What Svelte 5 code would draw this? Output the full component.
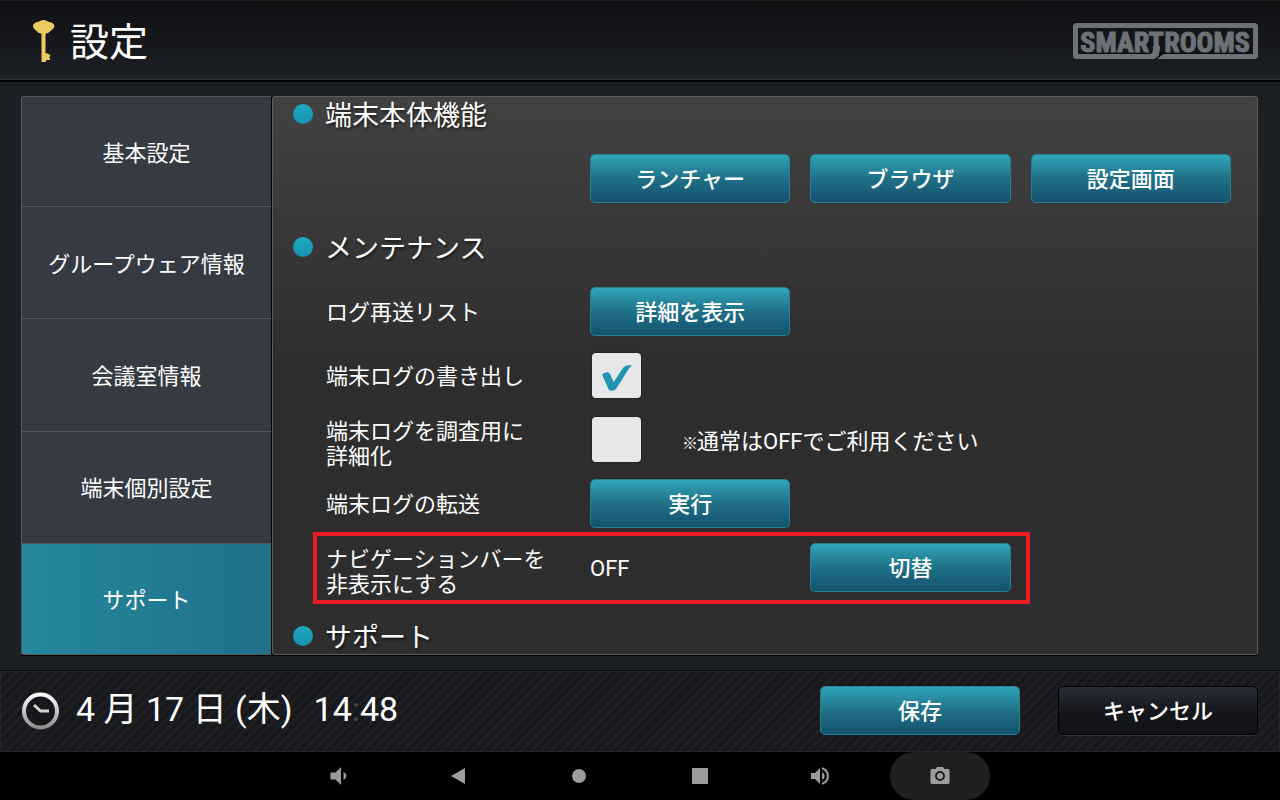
<script>
	const tabs = ['基本設定', 'グループウェア情報', '会議室情報', '端末個別設定', 'サポート'];

	let active = $state('サポート');
	let exportLog = $state(true);
	let verboseLog = $state(false);
	let navHidden = $state(false);
</script>

<div class="screen">
	<header class="header">
		<svg class="key" width="22" height="42" viewBox="0 0 22 42" aria-hidden="true">
			<path
				fill="#edcb62"
				d="M10.500 0c2.400 0 3.600 1.400 6 2 2.800.6 4.800 1.800 4.800 4 0 2-1.500 3-3.300 4.600-1.800 1.700-3 3-5.500 3.200v19.400h1.800l.8 1h2v2l-1 1 1 1.300v1.500h-3.300l-1 1v1H8.500V13.800c-2.500-.2-3.700-1.500-5.500-3.200C1.400 9 0 8 0 6c0-2.200 2-3.400 4.500-4 2.400-.6 3.600-2 6-2z"
			/>
		</svg>
		<h1>設定</h1>
		<svg class="logo" width="186" height="38" viewBox="0 0 186 38" role="img" aria-label="SMART ROOMS">
			<rect x="3.500" y="2.500" width="180" height="31" rx="1" fill="#131619" stroke="#08090a" stroke-width="5" />
			<rect x="3.500" y="3.500" width="180" height="31" rx="1" fill="none" stroke="#6d7278" stroke-width="5" />
			<path d="M88 30h6l-9 7h-4c4-1 6-3 7-7z" fill="#08090a" />
			<path d="M81 24h7c0 6-1 10-6 13h-5v-5c3 0 4-2 4-5z" fill="#6d7278" />
			<g class="logo-text">
				<text x="50" y="30">SMART</text>
				<text x="135" y="30">ROOMS</text>
			</g>
		</svg>
	</header>

	<main class="main">
		<nav class="tabs">
			{#each tabs as tab}
				<button type="button" class="tab" class:active={tab === active} onclick={() => (active = tab)}>
					{tab}
				</button>
			{/each}
		</nav>

		<section class="content">
			<h2>端末本体機能</h2>
			<div class="row">
				<button type="button" class="btn first">ランチャー</button>
				<button type="button" class="btn">ブラウザ</button>
				<button type="button" class="btn">設定画面</button>
			</div>

			<h2>メンテナンス</h2>
			<div class="row">
				<span class="label">ログ再送リスト</span>
				<button type="button" class="btn">詳細を表示</button>
			</div>
			<div class="row">
				<label class="label" for="export-log">端末ログの書き出し</label>
				<div class="field">
					<span class="check">
						<input id="export-log" type="checkbox" bind:checked={exportLog} />
						{#if exportLog}
							<svg width="30" height="30" viewBox="0 -4 30 30" aria-hidden="true">
								<path
									fill="#2094b2"
									d="M.2 10C1 8.200 3 7.400 5 7.300c1.500 0 2.400.5 3 1.700l3.700 8L20 4.500C21.500 2 23 .8 25 .5L29.700 0c-2 2.300-3.400 4.600-5 7L15 22.500c-1.400 2.300-3 3.300-5.300 3.300-1.600 0-2.600-.4-3.300-2z"
								/>
							</svg>
						{/if}
					</span>
				</div>
			</div>
			<div class="row">
				<label class="label two-line" for="verbose-log">端末ログを調査用に<br />詳細化</label>
				<div class="field">
					<span class="check">
						<input id="verbose-log" type="checkbox" bind:checked={verboseLog} />
					</span>
					<span class="note"><small>※</small>通常はOFFでご利用ください</span>
				</div>
			</div>
			<div class="row">
				<span class="label">端末ログの転送</span>
				<button type="button" class="btn">実行</button>
			</div>
			<div class="row">
				<span class="label two-line">ナビゲーションバーを<br />非表示にする</span>
				<output>{navHidden ? 'ON' : 'OFF'}</output>
				<button type="button" class="btn" onclick={() => (navHidden = !navHidden)}>切替</button>
				<div class="marker"></div>
			</div>

			<h2>サポート</h2>
		</section>
	</main>

	<footer class="footer">
		<svg class="clock" width="38" height="38" viewBox="0 0 38 38" aria-hidden="true">
			<defs>
				<linearGradient id="metal" x1="0" y1="0" x2="0" y2="1">
					<stop offset="0" stop-color="#ffffff" />
					<stop offset="1" stop-color="#8e8e8e" />
				</linearGradient>
			</defs>
			<circle cx="18.500" cy="19" r="16.500" fill="#15171a" stroke="url(#metal)" stroke-width="4" />
			<path d="M12 13l6.500 6H27" fill="none" stroke="#d2d2d2" stroke-width="3" />
		</svg>
		<span class="clock-text">4 月 17 日 (木)</span>
		<time class="clock-text">14<i>:</i>48</time>
		<div class="actions">
			<button type="button" class="btn">保存</button>
			<button type="button" class="btn dark">キャンセル</button>
		</div>
	</footer>

	<nav class="sysbar">
		<button type="button" aria-label="音量を下げる">
			<svg width="24" height="24" viewBox="0 0 24 24"><path d="M2.500 8.500v7h5l5.500 5.500V3L7.500 8.500zM15.500 8v8c1.700-.8 2.800-2.200 2.800-4s-1.100-3.200-2.800-4z" /></svg>
		</button>
		<button type="button" aria-label="戻る">
			<svg width="24" height="24" viewBox="0 0 24 24"><path d="M17 4v16L3 12z" /></svg>
		</button>
		<button type="button" aria-label="ホーム">
			<svg width="24" height="24" viewBox="0 0 24 24"><circle cx="11" cy="12" r="7" /></svg>
		</button>
		<button type="button" aria-label="履歴">
			<svg width="24" height="24" viewBox="0 0 24 24"><rect x="4" y="4" width="16" height="16" rx="1" /></svg>
		</button>
		<button type="button" aria-label="音量を上げる">
			<svg width="24" height="24" viewBox="0 0 24 24">
				<path
					d="M3 9v6h4l5 5V4L7 9zm13.500 3c0-1.770-1.020-3.290-2.500-4.030v8.050c1.480-.73 2.500-2.250 2.500-4.020zM14 3.230v2.060c2.890.86 5 3.540 5 6.710s-2.110 5.850-5 6.710v2.060c4.010-.91 7-4.490 7-8.770s-2.990-7.860-7-8.770z"
				/>
			</svg>
		</button>
		<button type="button" class="shot" aria-label="スクリーンショット">
			<svg width="24" height="24" viewBox="0 0 24 24">
				<path
					d="M9 3L7.500 5H4c-.9 0-1.500.6-1.500 1.500v12c0 .9.600 1.500 1.500 1.500h16c.9 0 1.500-.6 1.500-1.500v-12c0-.9-.6-1.500-1.500-1.500h-3.500L15 3z"
				/>
				<circle cx="12" cy="12" r="4" class="lens" />
			</svg>
		</button>
	</nav>
</div>

<style>
	:global(body) {
		margin: 0;
		background: #000;
	}

	.screen {
		display: flex;
		flex-direction: column;
		height: 100vh;
		background: #1c1f24;
		color: #fff;
		font-family: Roboto, 'Noto Sans CJK JP', sans-serif;
		font-size: 22px;
	}

	button {
		box-sizing: border-box;
		margin: 0;
		padding: 0;
		border: 0;
		color: inherit;
		font: inherit;
		cursor: pointer;
	}

	.header {
		display: flex;
		align-items: center;
		box-sizing: border-box;
		height: 82px;
		padding: 0 22px 0 33px;
		border-top: 1px solid #1f2225;
		border-bottom: 2px solid #000;
		background: linear-gradient(#0f1012, #1c1f24);
		box-shadow: inset 0 -1px #2d3035;
	}

	h1 {
		margin: 0 auto 0 15px;
		padding-top: 4px;
		font-size: 39px;
		font-weight: 400;
		line-height: 48px;
	}

	.logo-text {
		fill: #6d7278;
		stroke: #6d7278;
		stroke-width: 1px;
		font-family: 'Liberation Sans Narrow', 'Roboto Condensed', 'Liberation Sans', sans-serif;
		font-size: 28px;
		font-weight: 700;
		text-anchor: middle;
	}

	.main {
		display: flex;
		flex: 1;
		gap: 1px;
		min-height: 0;
		padding: 14px 22px 15px 21px;
	}

	.tabs {
		display: grid;
		grid-template-rows: 110fr repeat(4, 112fr);
		width: 250px;
		box-shadow: 1px 0 #000, 0 1px #000;
	}

	.tab {
		padding-bottom: 2px;
		border-top: 1px solid #54575b;
		border-left: 1px solid #54575b;
		background: #363b43;
	}

	.tab:first-child {
		border-top-left-radius: 3px;
	}

	.tab:last-child {
		border-bottom: 1px solid #54575b;
		border-bottom-left-radius: 3px;
	}

	.tab.active {
		background: linear-gradient(90deg, #25889b, #20708a);
	}

	.content {
		flex: 1;
		min-width: 0;
		overflow-y: auto;
		scrollbar-width: none;
		border: 1px solid #5c5c5c;
		border-radius: 3px;
		background: linear-gradient(#424242, #2d2d2d 50%, #2e2e2e);
		box-shadow: 0 1px #000;
	}

	h2 {
		display: flex;
		align-items: center;
		gap: 12px;
		margin: 0;
		padding: 22px 20px 13px;
		font-size: 27px;
		font-weight: 400;
		line-height: 34px;
		text-shadow: 1px 2px 3px rgba(0, 0, 0, 0.6);
	}

	h2:first-child {
		padding-top: 2px;
	}

	h2::before {
		content: '';
		width: 20px;
		height: 20px;
		margin-bottom: 4px;
		border-radius: 50%;
		background: linear-gradient(#1faac0, #1592b0);
	}

	.row {
		position: relative;
		display: grid;
		grid-template-columns: 244px repeat(3, 1fr);
		align-items: center;
		gap: 20px;
		box-sizing: border-box;
		height: 64px;
		padding: 1px 26px 0 53px;
	}

	.label {
		padding-top: 2px;
		line-height: 25px;
		white-space: nowrap;
	}

	.label.two-line {
		padding-top: 8px;
	}

	.btn {
		height: 49px;
		padding-bottom: 4px;
		border: 1px solid #25808f;
		border-radius: 5px;
		background: linear-gradient(#30a6b8, #1f7087 50%, #155270);
		font-weight: 500;
	}

	.btn.first {
		grid-column: 2;
	}

	.btn.dark {
		border-color: #000;
		background: linear-gradient(#2a2e38, #15171c 50%, #101216);
		box-shadow: 0 1px #2b2e33;
	}

	.field {
		display: flex;
		grid-column: 2 / -1;
		align-items: center;
		gap: 42px;
		padding-left: 2px;
	}

	.check {
		display: grid;
		place-items: center;
	}

	.check > :global(*) {
		grid-area: 1 / 1;
	}

	.check svg {
		pointer-events: none;
	}

	.check input {
		width: 49px;
		height: 45px;
		margin: 0;
		appearance: none;
		border-radius: 4px;
		background: #e6e7e9;
		box-shadow: 0 0 2px #111;
	}

	.note {
		padding-bottom: 2px;
	}

	.note small {
		margin: 0 -1px;
		font-size: 16px;
		font-weight: 700;
	}

	output {
		padding-top: 2px;
	}

	/* frame around the label and the two columns beside it */
	.marker {
		position: absolute;
		grid-area: 1 / 1 / 2 / 4;
		inset: -4px -19px -5px -13px;
		border: 4px solid #ed1c24;
		pointer-events: none;
	}

	.footer {
		display: flex;
		align-items: center;
		box-sizing: border-box;
		height: 82px;
		padding: 0 22px 2px;
		border-top: 1px solid #050607;
		background: repeating-linear-gradient(135deg, #16181b 0 3px, #1d1f23 4px 6px, #16181b 7px);
		box-shadow: inset 0 0 0 1px #25272b;
	}

	.clock-text {
		margin-left: 16px;
		padding-bottom: 3px;
		font-size: 34px;
		line-height: 40px;
		white-space: nowrap;
	}

	time.clock-text {
		margin-left: 21px;
	}

	time i {
		color: #45474a;
		font-style: normal;
	}

	.actions {
		display: flex;
		gap: 38px;
		margin-left: auto;
	}

	.actions .btn {
		width: 200px;
	}

	.sysbar {
		display: flex;
		justify-content: center;
		gap: 20px;
		height: 48px;
		background: #000;
	}

	.sysbar button {
		display: grid;
		place-items: center;
		width: 100px;
		border-radius: 24px;
		background: none;
	}

	.sysbar svg {
		fill: #9c9c9c;
	}

	.sysbar .shot {
		background: #1f1f1f;
	}

	.lens {
		stroke: #1f1f1f;
		stroke-width: 2px;
	}
</style>
